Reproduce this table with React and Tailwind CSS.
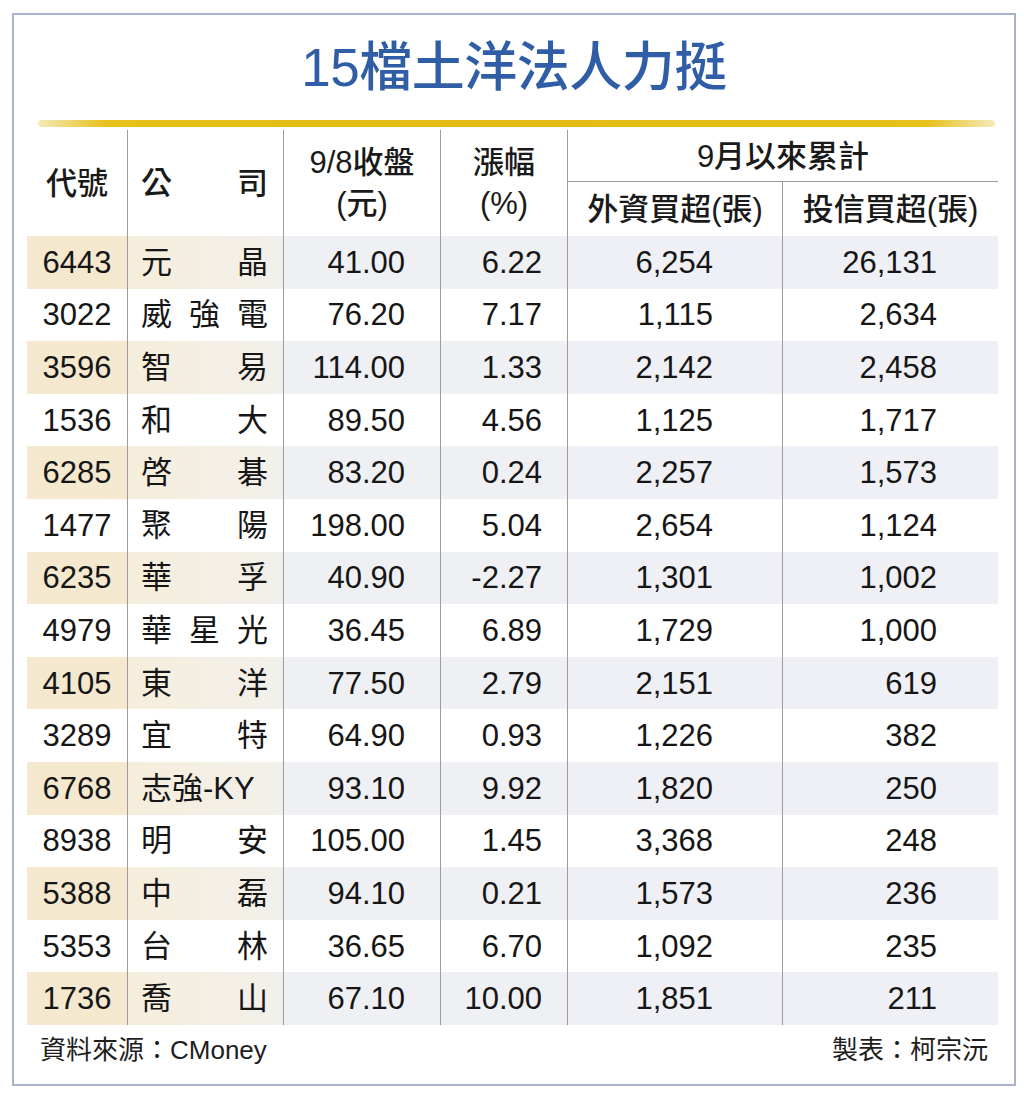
const rows = [
  ['6443', '元晶', '41.00', '6.22', '6,254', '26,131'],
  ['3022', '威強電', '76.20', '7.17', '1,115', '2,634'],
  ['3596', '智易', '114.00', '1.33', '2,142', '2,458'],
  ['1536', '和大', '89.50', '4.56', '1,125', '1,717'],
  ['6285', '啓碁', '83.20', '0.24', '2,257', '1,573'],
  ['1477', '聚陽', '198.00', '5.04', '2,654', '1,124'],
  ['6235', '華孚', '40.90', '-2.27', '1,301', '1,002'],
  ['4979', '華星光', '36.45', '6.89', '1,729', '1,000'],
  ['4105', '東洋', '77.50', '2.79', '2,151', '619'],
  ['3289', '宜特', '64.90', '0.93', '1,226', '382'],
  ['6768', '志強-KY', '93.10', '9.92', '1,820', '250'],
  ['8938', '明安', '105.00', '1.45', '3,368', '248'],
  ['5388', '中磊', '94.10', '0.21', '1,573', '236'],
  ['5353', '台林', '36.65', '6.70', '1,092', '235'],
  ['1736', '喬山', '67.10', '10.00', '1,851', '211'],
];

const cols = 'grid grid-cols-[100px_156px_157px_127px_215px_216px]';
const line = 'border-l border-[#9c9c9c]';

function Company({ name }) {
  // 兩字、三字公司名分散對齊，含英文的照常排
  const parts = name.includes('-') ? [name] : name.split('');
  return (
    <div className="flex justify-between pl-[13px] pr-[15px]">
      {parts.map((c, i) => (
        <span key={i}>{c}</span>
      ))}
    </div>
  );
}

function Row({ r, shaded }) {
  return (
    <div className={`${cols} h-[52.6px] items-center text-[31px] leading-none text-[#161616]`}>
      <div className={`h-full flex items-center justify-center ${shaded ? 'bg-[#f4e8cf]' : ''}`}>{r[0]}</div>
      <div className={`h-full flex flex-col justify-center ${line} ${shaded ? 'bg-[linear-gradient(to_right,#f6eedc,#f2f0eb)]' : ''}`}>
        <Company name={r[1]} />
      </div>
      <div className={`h-full flex items-center justify-end pr-[35px] ${line} ${shaded ? 'bg-[#eef0f4]' : ''}`}>{r[2]}</div>
      <div className={`h-full flex items-center justify-end pr-[25px] ${line} ${shaded ? 'bg-[#eef0f4]' : ''}`}>{r[3]}</div>
      <div className={`h-full flex items-center justify-end pr-[69px] ${line} ${shaded ? 'bg-[#eef0f5]' : ''}`}>{r[4]}</div>
      <div className={`h-full flex items-center justify-end pr-[61px] ${line} ${shaded ? 'bg-[#eef0f5]' : ''}`}>{r[5]}</div>
    </div>
  );
}

export default function App() {
  return (
    <div className="w-[1024px] h-[1099px] bg-white pt-[13px] pl-[12px] font-['Liberation_Sans','Noto_Sans_CJK_TC',sans-serif]">
      <div className="w-[1004px] h-[1073px] border-2 border-[#a9b3cd] flex flex-col">
        {/* 標題 */}
        <div className="h-[105px] flex items-center justify-center">
          <h1 className="text-[53px] leading-none font-medium text-[#2f5ea6] tracking-[-0.5px]">15檔土洋法人力挺</h1>
        </div>
        <div className="ml-[24px] w-[957px] h-[7px] rounded-full bg-[linear-gradient(to_right,#f6eab8,#e6c11c_7%,#e3bb12_50%,#e6c11c_93%,#f6eab8)]" />

        {/* 表格 */}
        <div className="ml-[13px] w-[971px] mt-[3px]">
          <div className={`${cols} grid-rows-[52px_54px] text-[31px] leading-none font-medium text-[#1a1a1a]`}>
            <div className="row-span-2 flex items-center justify-center">代號</div>
            <div className={`row-span-2 flex flex-col justify-center ${line}`}>
              <div className="flex justify-between pl-[13px] pr-[15px]">
                <span>公</span>
                <span>司</span>
              </div>
            </div>
            <div className={`row-span-2 flex flex-col items-center justify-center gap-[10px] ${line}`}>
              <span>9/8收盤</span>
              <span>(元)</span>
            </div>
            <div className={`row-span-2 flex flex-col items-center justify-center gap-[10px] ${line}`}>
              <span>漲幅</span>
              <span>(%)</span>
            </div>
            <div className={`col-span-2 flex items-center justify-center pt-[2px] border-b border-b-[#9c9c9c] ${line}`}>
              9月以來累計
            </div>
            <div className={`flex items-center justify-center ${line}`}>外資買超(張)</div>
            <div className={`flex items-center justify-center ${line}`}>投信買超(張)</div>
          </div>

          {rows.map((r, i) => (
            <Row key={r[0]} r={r} shaded={i % 2 === 0} />
          ))}
        </div>

        {/* 資料來源 */}
        <div className="h-[50px] flex items-center justify-between px-[26px] text-[26px] leading-none text-[#1e1e1e]">
          <span>資料來源：CMoney</span>
          <span>製表：柯宗沅</span>
        </div>
      </div>
    </div>
  );
}
